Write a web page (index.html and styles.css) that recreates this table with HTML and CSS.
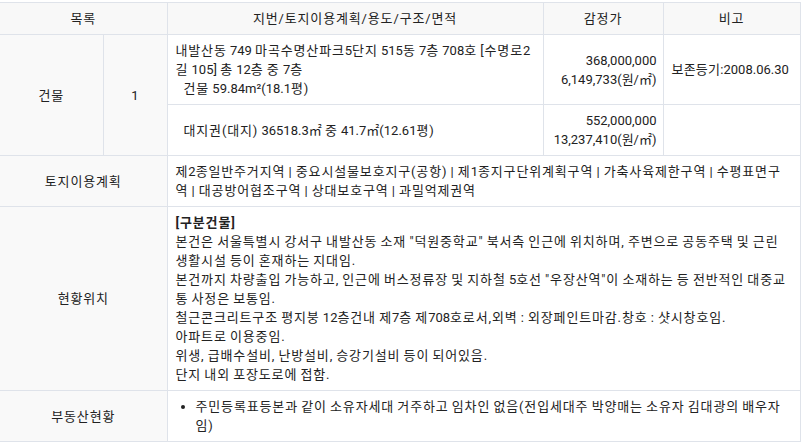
FILE: index.html
```html
<!DOCTYPE html>
<html lang="ko">
<head>
<meta charset="utf-8">
<link rel="stylesheet" href="styles.css">
</head>
<body>
<table class="grid">
  <colgroup>
    <col class="c1"><col class="c2"><col class="c3"><col class="c4"><col class="c5">
  </colgroup>
  <thead>
    <tr>
      <th colspan="2" class="first">목록</th>
      <th>지번/토지이용계획/용도/구조/면적</th>
      <th>감정가</th>
      <th>비고</th>
    </tr>
  </thead>
  <tbody>
    <tr>
      <td rowspan="2" class="label first">건물</td>
      <td rowspan="2" class="center"><span class="n">1</span></td>
      <td class="nw">내발산동 <span class="n">749</span> 마곡수명산파크<span class="n">5</span>단지 <span class="n">515</span>동 <span class="n">7</span>층 <span class="n">708</span>호 [수명로<span class="n">2</span><br>길 <span class="n">105]</span> 총 <span class="n">12</span>층 중 <span class="n">7</span>층<br><span class="indent">건물 <span class="n">59.84m²(18.1</span>평)</span></td>
      <td class="price">368,000,000<br>6,149,733(원/㎡)</td>
      <td class="nw note">보존등기:<span class="n">2008.06.30</span></td>
    </tr>
    <tr>
      <td class="nw"><span class="indent">대지권(대지) <span class="n">36518.3㎡</span> 중 <span class="n">41.7㎡(12.61</span>평)</span></td>
      <td class="price">552,000,000<br>13,237,410(원/㎡)</td>
      <td></td>
    </tr>
    <tr>
      <td colspan="2" class="label first">토지이용계획</td>
      <td colspan="3" class="nw">제<span class="n">2</span>종일반주거지역 | 중요시설물보호지구(공항) | 제<span class="n">1</span>종지구단위계획구역 | 가축사육제한구역 | 수평표면구<br>역 | 대공방어협조구역 | 상대보호구역 | 과밀억제권역</td>
    </tr>
    <tr>
      <td colspan="2" class="label first">현황위치</td>
      <td colspan="3" class="nw"><b>[구분건물]</b><br>본건은 서울특별시 강서구 내발산동 소재 "덕원중학교" 북서측 인근에 위치하며, 주변으로 공동주택 및 근린<br>생활시설 등이 혼재하는 지대임.<br>본건까지 차량출입 가능하고, 인근에 버스정류장 및 지하철 <span class="n">5</span>호선 "우장산역"이 소재하는 등 전반적인 대중교<br>통 사정은 보통임.<br>철근콘크리트구조 평지붕 <span class="n">12</span>층건내 제<span class="n">7</span>층 제<span class="n">708</span>호로서,외벽 : 외장페인트마감.창호 : 샷시창호임.<br>아파트로 이용중임.<br>위생, 급배수설비, 난방설비, 승강기설비 등이 되어있음.<br>단지 내외 포장도로에 접함.</td>
    </tr>
    <tr>
      <td colspan="2" class="label first">부동산현황</td>
      <td colspan="3" class="nw"><ul class="list"><li>주민등록표등본과 같이 소유자세대 거주하고 임차인 없음(전입세대주 박양매는 소유자 김대광의 배우자<br>임)</li></ul></td>
    </tr>
  </tbody>
</table>
</body>
</html>
```
FILE: styles.css
```css
html, body {
  margin: 0;
  padding: 0;
  background: #fff;
}
body {
  padding-top: 2px;
  font-family: Roboto, "Noto Sans CJK KR", sans-serif;
  font-size: 13px;
  line-height: 19px;
  color: #222;
  letter-spacing: 0.85px;
  word-spacing: -0.85px;
}
.grid {
  width: 800px;
  border-collapse: collapse;
  table-layout: fixed;
}
.c1 { width: 103px; }
.c2 { width: 64px; }
.c3 { width: 376px; }
.c4 { width: 120px; }
.c5 { width: 137px; }
.grid th,
.grid td {
  border: 1px solid #dfe3ea;
  padding: 6px 8px;
  vertical-align: middle;
  text-align: left;
}
.grid th {
  background: #f8f8f8;
  font-weight: normal;
  text-align: center;
}
.grid .first {
  border-left: none;
}
.grid td.label,
.grid td.center {
  background: #f9f9f9;
  text-align: center;
}
.grid td.price {
  text-align: right;
  padding-right: 6px;
  letter-spacing: 0;
  word-spacing: 0;
}
.grid td.nw {
  white-space: nowrap;
}
.grid td.note {
  padding-right: 0;
  overflow: hidden;
  letter-spacing: 0.2px;
}
.n {
  letter-spacing: 0;
}
.indent {
  padding-left: 8px;
}
.list {
  margin: 0;
  padding-left: 20px;
}
b {
  font-weight: bold;
}
```
